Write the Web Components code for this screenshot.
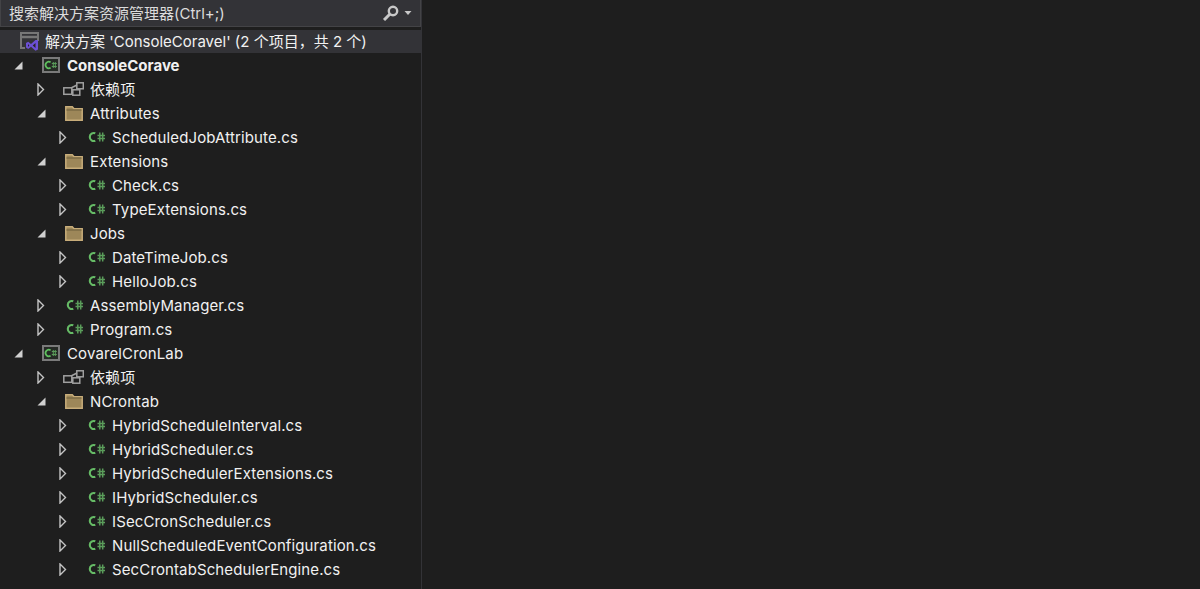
<!DOCTYPE html>
<html lang="zh">
<head>
<meta charset="utf-8">
<title>Solution Explorer</title>
<style>
  html, body { margin: 0; height: 100%; background: #1e1e1e; overflow: hidden; }
  body { font: 15px Inter, "Noto Sans CJK SC", sans-serif; color: #f1f1f1; }
</style>
</head>
<body>
<solution-explorer>
  <search-box placeholder="搜索解决方案资源管理器(Ctrl+;)"></search-box>
  <tree-row depth="0" icon="solution" selected>解决方案 'ConsoleCoravel' (2 个项目，共 2 个)</tree-row>
  <tree-row depth="0" arrow="open" icon="project" bold>ConsoleCorave</tree-row>
  <tree-row depth="1" arrow="closed" icon="deps">依赖项</tree-row>
  <tree-row depth="1" arrow="open" icon="folder">Attributes</tree-row>
  <tree-row depth="2" arrow="closed" icon="cs">ScheduledJobAttribute.cs</tree-row>
  <tree-row depth="1" arrow="open" icon="folder">Extensions</tree-row>
  <tree-row depth="2" arrow="closed" icon="cs">Check.cs</tree-row>
  <tree-row depth="2" arrow="closed" icon="cs">TypeExtensions.cs</tree-row>
  <tree-row depth="1" arrow="open" icon="folder">Jobs</tree-row>
  <tree-row depth="2" arrow="closed" icon="cs">DateTimeJob.cs</tree-row>
  <tree-row depth="2" arrow="closed" icon="cs">HelloJob.cs</tree-row>
  <tree-row depth="1" arrow="closed" icon="cs">AssemblyManager.cs</tree-row>
  <tree-row depth="1" arrow="closed" icon="cs">Program.cs</tree-row>
  <tree-row depth="0" arrow="open" icon="project">CovarelCronLab</tree-row>
  <tree-row depth="1" arrow="closed" icon="deps">依赖项</tree-row>
  <tree-row depth="1" arrow="open" icon="folder">NCrontab</tree-row>
  <tree-row depth="2" arrow="closed" icon="cs">HybridScheduleInterval.cs</tree-row>
  <tree-row depth="2" arrow="closed" icon="cs">HybridScheduler.cs</tree-row>
  <tree-row depth="2" arrow="closed" icon="cs">HybridSchedulerExtensions.cs</tree-row>
  <tree-row depth="2" arrow="closed" icon="cs">IHybridScheduler.cs</tree-row>
  <tree-row depth="2" arrow="closed" icon="cs">ISecCronScheduler.cs</tree-row>
  <tree-row depth="2" arrow="closed" icon="cs">NullScheduledEventConfiguration.cs</tree-row>
  <tree-row depth="2" arrow="closed" icon="cs">SecCrontabSchedulerEngine.cs</tree-row>
</solution-explorer>

<script>
const ICONS = {
  // window with the purple VS mark over its lower right corner
  solution: `<svg width="19" height="19" viewBox="0 0 19 19" fill="none">
      <path d="M1 12V1h17v8" stroke="#777" stroke-width="2"/>
      <path d="M1 5h17" stroke="#777" stroke-width="2.500"/>
      <path d="M1 12v4h4" stroke="#777" stroke-width="2"/>
      <path d="M18 8v9.500l-2.500 1.300-4.500-4-2.800 2.200L6 15.500V11l2.200-1.200L11 12l4.500-4z" fill="#6c50d4"/>
      <path d="M15.500 11v5l-2.800-2.500zM8 12v3l1.300-1.500z" fill="#262626"/>
    </svg>`,
  project: `<svg width="18" height="16" viewBox="0 0 18 16" fill="none">
      <rect x="1" y="1" width="16" height="14" fill="#252a25" stroke="#7a7a7a" stroke-width="2"/>
      <path d="M8.600 5.200a3.300 3.300 0 1 0 0 5.600" stroke="#5fc05f" stroke-width="1.700"/>
      <path d="M9.800 6.500h5M9.800 9.500h5M11.300 5v6M13.300 5v6" stroke="#5a9c5a" stroke-width="1"/>
    </svg>`,
  deps: `<svg width="21" height="14" viewBox="0 0 21 14" fill="none" stroke="#a0a0a0" stroke-width="1.500" style="margin-left:-2px">
      <rect x=".8" y="5.800" width="8" height="6.500"/>
      <rect x="9.800" y="7.800" width="7" height="5.400"/>
      <rect x="13.800" y=".8" width="6.500" height="6"/>
      <path d="M8 6l6-3M8.500 10.500l1.500.5"/>
    </svg>`,
  folder: `<svg width="18" height="15" viewBox="0 0 18 15" fill="none">
      <path d="M.8 .8h6.500l1.700 2h8.200v11.400H.8z" fill="#9d8759" stroke="#c8ad7a" stroke-width="1.500"/>
      <path d="M1.500 4h15" stroke="#7d6b46" stroke-width="1.500"/>
    </svg>`,
  cs: `<svg width="19" height="12" viewBox="0 0 19 12" fill="none">
      <path d="M8.300 2.300a4 4 0 1 0 0 7.400" stroke="#66bb66" stroke-width="2.100"/>
      <path d="M10.500 4.500h7.500M10.500 7.500h7.500M12.800 1.500v9M15.700 1.500v9" stroke="#5a9c5a" stroke-width="1.500"/>
    </svg>`
}

const ARROWS = {
  open: `<svg width="9" height="9" viewBox="0 0 9 9"><path d="M8.500 .5v8h-8z" fill="#d0d0d0"/></svg>`,
  closed: `<svg width="8" height="13" viewBox="0 0 8 13" fill="none"><path d="M1 1l5.500 5.500L1 12z" stroke="#c4c4c4" stroke-width="1.400"/></svg>`
}

const INDENT = [14, 37, 59]

class SolutionExplorer extends HTMLElement {
  connectedCallback() {
    this.attachShadow({ mode: 'open' });
    this.shadowRoot.innerHTML = `
      <style>
        :host {
          display: flex;
          flex-direction: column;
          width: 421px;
          height: 589px;
          background: #1e1e1e;
          border-right: 1px solid #333337;
          overflow: hidden;
        }
      </style>
      <slot></slot>
    `;
  }
}

class SearchBox extends HTMLElement {
  connectedCallback() {
    this.attachShadow({ mode: 'open' });
    this.shadowRoot.innerHTML = `
      <style>
        :host {
          display: flex;
          align-items: center;
          height: 27px;
          box-sizing: border-box;
          margin-bottom: 3px;
          padding: 0 7px 0 9px;
          background: #333337;
          border: 1px solid #434346;
          border-top: 0;
          border-left: 0;
          box-shadow: inset 1px 0 #434346;
        }
        .hint { flex: 1; color: #dcdcdc; font-size: 15px; line-height: 27px; white-space: nowrap; }
        svg { display: block; }
      </style>
      <span class="hint">${this.getAttribute('placeholder')}</span>
      <svg width="18" height="16" viewBox="0 0 18 16" fill="none">
        <circle cx="11" cy="6" r="4.200" stroke="#c8c8c8" stroke-width="2.400"/>
        <path d="M8 9L2 15" stroke="#c8c8c8" stroke-width="3"/>
      </svg>
      <svg width="10" height="16" viewBox="0 0 10 16" style="margin-left:3px"><path d="M1.500 6h7L5 10z" fill="#c8c8c8"/></svg>
    `;
  }
}

class TreeRow extends HTMLElement {
  connectedCallback() {
    const depth = Number(this.getAttribute('depth') || 0);
    const arrow = this.getAttribute('arrow');
    const icon = this.getAttribute('icon');
    this.attachShadow({ mode: 'open' });
    this.shadowRoot.innerHTML = `
      <style>
        :host {
          display: flex;
          align-items: center;
          flex: none;
          height: 24px;
          line-height: 22px;
          letter-spacing: .12px;
          padding-left: ${INDENT[depth]}px;
          white-space: nowrap;
        }
        :host([selected]) { height: 23px; background: #333337; padding-left: 20px; letter-spacing: 0; }
        :host([bold]) { font-weight: 700; letter-spacing: 0; }
        .arrow { width: 28px; display: flex; align-items: center; }
        .icon { width: 25px; display: flex; align-items: center; }
        .label { padding-top: 2px; }
        :host([selected]) .label { padding-top: 0; }
      </style>
      ${arrow ? `<span class="arrow">${ARROWS[arrow]}</span>` : ''}
      <span class="icon">${ICONS[icon]}</span>
      <span class="label"><slot></slot></span>
    `;
  }
}

customElements.define('solution-explorer', SolutionExplorer);
customElements.define('search-box', SearchBox);
customElements.define('tree-row', TreeRow);
</script>
</body>
</html>
